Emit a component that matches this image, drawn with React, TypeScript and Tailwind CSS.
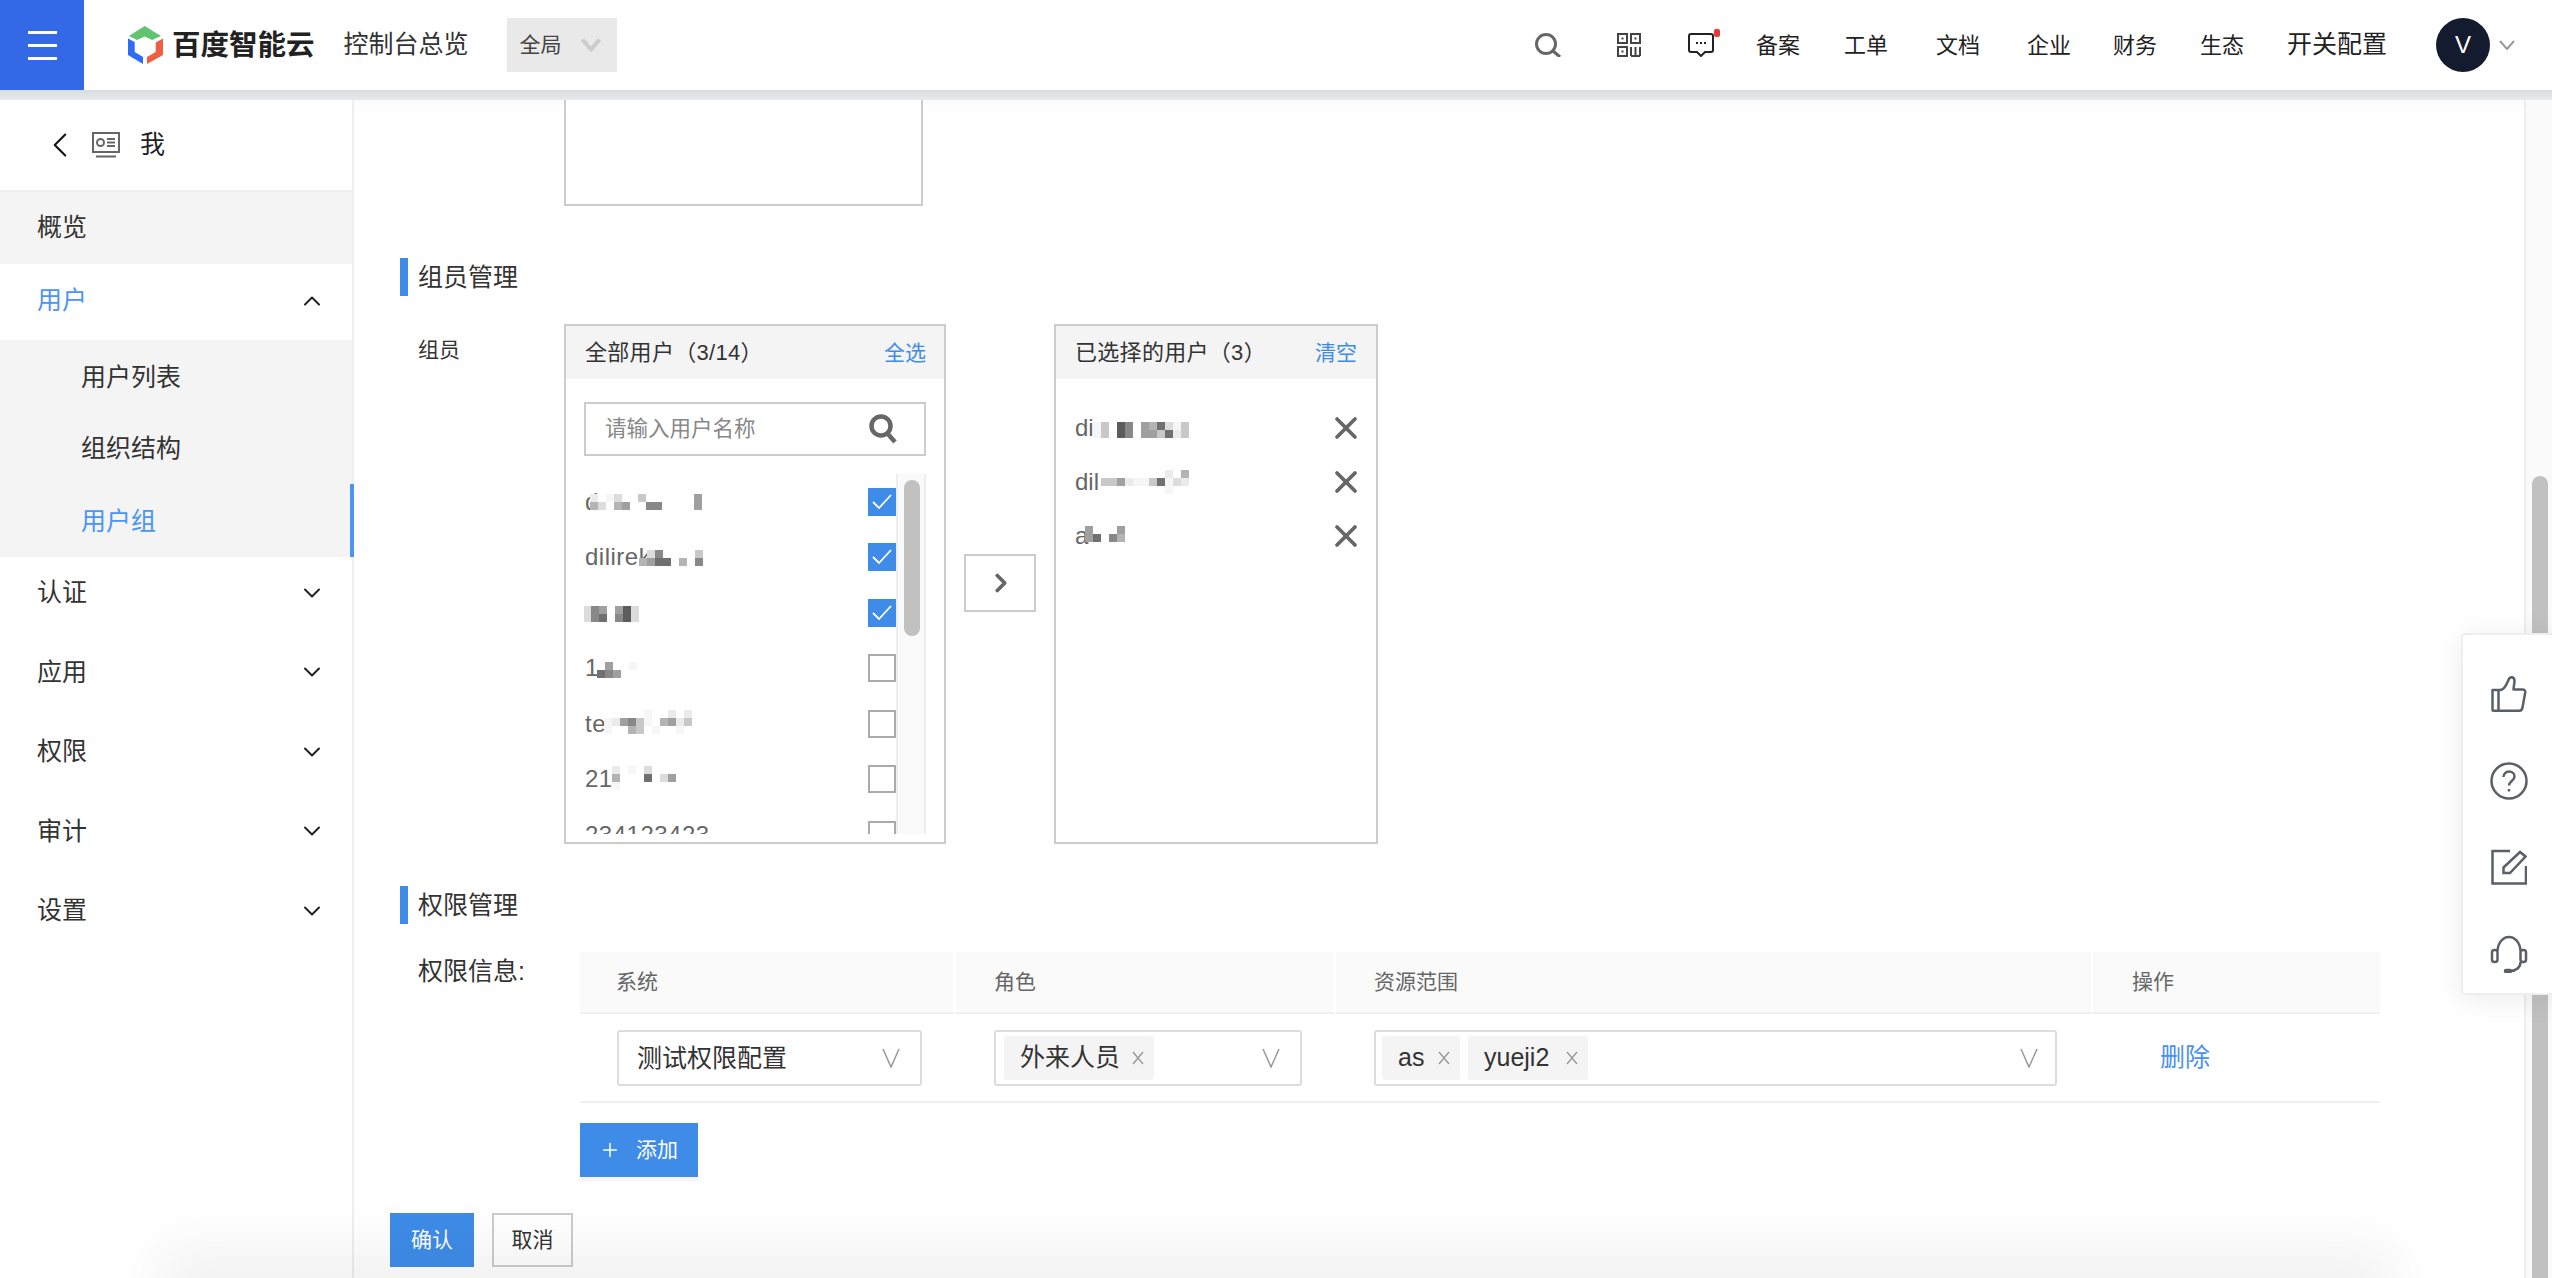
import { ChevronDown, ChevronUp, ChevronLeft, ChevronRight, Plus, X } from 'lucide-react'

const SHADES: Record<string, string> = {
  a: '#f6f6f6',
  b: '#ebebeb',
  c: '#dcdcdc',
  d: '#c8c8c8',
  e: '#b4b4b4',
  f: '#a0a0a0',
  g: '#888888',
  h: '#707070',
  i: '#5c5c5c',
}

// pixelated names from the screenshot, one letter per 8px cell
function Mosaic({ rows, className }: { rows: string[]; className: string }) {
  const cols = Math.max(...rows.map((r) => r.length))
  return (
    <svg className={className} width={cols * 8} height={rows.length * 8} viewBox={`0 0 ${cols * 8} ${rows.length * 8}`}>
      {rows.map((row, y) =>
        row.split('').map((c, x) =>
          SHADES[c] ? <rect key={`${x}-${y}`} x={x * 8} y={y * 8} width="8" height="8" fill={SHADES[c]} /> : null,
        ),
      )}
    </svg>
  )
}

function ThinChevron({ className }: { className: string }) {
  return (
    <svg className={className} width="18" height="20" viewBox="0 0 18 20" fill="none" stroke="#999" strokeWidth="1.5">
      <path d="M1 1l8 18 8-18" />
    </svg>
  )
}

function TagX() {
  return (
    <svg width="12" height="14" viewBox="0 0 12 14" fill="none" stroke="#999" strokeWidth="1.4">
      <path d="M1 1l10 12M11 1L1 13" />
    </svg>
  )
}

function Tag({ label, className }: { label: string; className: string }) {
  return (
    <div className={`flex h-[44px] items-center justify-between rounded-[3px] bg-[#f4f4f4] pl-[16px] pr-[10px] text-[25px] text-[#333] ${className}`}>
      <span>{label}</span>
      <TagX />
    </div>
  )
}

function Logo() {
  return (
    <svg width="36" height="38" viewBox="0 0 36 38">
      <path d="M16.7 0L33 10l-9 4-7.300-3.500L9 14l-8-4z" fill="#5fc36f" />
      <path d="M0 12.500L6.700 16v10L15 31v7L0 29z" fill="#2f6cf6" />
      <path d="M35 12.500V29l-16 9v-7l8.700-5V16.500z" fill="#ee5f42" />
    </svg>
  )
}

function SectionTitle({ title, className }: { title: string; className: string }) {
  return (
    <div className={`flex h-[38px] items-center ${className}`}>
      <div className="h-full w-[8px] bg-[#3e8ce8]" />
      <span className="ml-[10px] pt-[2px] text-[25px] text-[#333]">{title}</span>
    </div>
  )
}

function Checkbox({ checked }: { checked: boolean }) {
  if (checked) {
    return (
      <div className="flex h-[28px] w-[28px] shrink-0 items-center justify-center bg-[#3e8ce8]">
        <svg width="20" height="16" viewBox="0 0 20 16" fill="none" stroke="#fff" strokeWidth="1.8">
          <path d="M1 8l6 6L19 1" />
        </svg>
      </div>
    )
  }
  return <div className="h-[28px] w-[28px] shrink-0 border-2 border-[#aaa] bg-white" />
}

const allUsers = [
  { text: 'd', checked: true, rows: ['b.ac..d......f', 'ec.ef..gg....f'], mosaic: 'absolute left-[6px] top-[20px]' },
  { text: 'dilirek', checked: true, rows: ['.cg....d', 'efhh.e.g'], mosaic: 'absolute left-[55px] top-[20px]' },
  { text: '', checked: true, rows: ['cgf.fic', 'cgh.gic'], mosaic: 'absolute -left-[1px] top-[21px]' },
  { text: '1', checked: false, rows: ['.f..a', 'hgf'], mosaic: 'absolute left-[13px] top-[21px]' },
  { text: 'te', checked: false, rows: ['.....a..b.b', 'abfgda.efbd', 'a..ed.a..a'], mosaic: 'absolute left-[20px] top-[14px]' },
  { text: '21', checked: false, rows: ['b.a.c', 'e...h.cf', 'a'], mosaic: 'absolute left-[28px] top-[14px]' },
  { text: '234123423', checked: false, rows: [], mosaic: '' },
]

const selectedUsers = [
  { text: 'di', rows: ['ad.ig.fehcad', 'ad.ig.ffdhbd'], mosaic: 'absolute left-[18px] top-[21px]' },
  { text: 'dil', rows: ['........b.e', 'ddfbaadhacb', '........a'], mosaic: 'absolute left-[26px] top-[15px]' },
  { text: 'a', rows: ['f...f', 'fh.ge'], mosaic: 'absolute left-[10px] top-[17px]' },
]

const navItems = [
  { label: '备案', className: 'ml-[42px]' },
  { label: '工单', className: 'ml-[44px]' },
  { label: '文档', className: 'ml-[48px]' },
  { label: '企业', className: 'ml-[47px]' },
  { label: '财务', className: 'ml-[42px]' },
  { label: '生态', className: 'ml-[43px]' },
]

const collapsedMenus = ['认证', '应用', '权限', '审计', '设置']

export default function App() {
  return (
    <div className="relative flex h-[1278px] w-[2552px] flex-col overflow-hidden bg-white font-['Liberation_Sans','Noto_Sans_CJK_SC',sans-serif] text-[21px] text-[#333]">
      {/* Top bar */}
      <header className="flex h-[90px] shrink-0 items-center bg-white">
        <div className="flex h-full w-[84px] flex-col items-center justify-center gap-[10px] bg-[#3369e7]">
          <div className="h-[3px] w-[29px] bg-white" />
          <div className="h-[3px] w-[29px] bg-white" />
          <div className="h-[3px] w-[29px] bg-white" />
        </div>
        <div className="ml-[44px]">
          <Logo />
        </div>
        <span className="ml-[8px] text-[28.5px] font-bold text-[#222]">百度智能云</span>
        <span className="ml-[29px] text-[25px] text-[#333]">控制台总览</span>
        <div className="ml-[38px] flex h-[54px] w-[110px] items-center bg-[#e9e9e9] pl-[13px] text-[#444]">
          <span>全局</span>
          <svg className="ml-[19px]" width="20" height="14" viewBox="0 0 20 14" fill="none" stroke="#ccc" strokeWidth="4">
            <path d="M1.500 1.500L10 11.500l8.500-10" />
          </svg>
        </div>

        <div className="ml-auto flex items-center text-[22px] text-[#222]">
          <svg width="26" height="24" viewBox="0 0 26 24" fill="none" stroke="#666" strokeWidth="3">
            <circle cx="11" cy="11" r="9.500" />
            <path d="M18 18l7 6" />
          </svg>
          <svg className="ml-[56px]" width="24" height="24" viewBox="0 0 24 24" fill="none" stroke="#444" strokeWidth="2">
            <rect x="1" y="1" width="9" height="9" />
            <rect x="14" y="1" width="9" height="9" />
            <rect x="1" y="14" width="9" height="9" />
            <path d="M14 14v9M18.500 14v9M23 14v9M14 23h9" />
            <path d="M4.500 5.500h2M17.500 5.500h2M4.500 18.500h2" />
          </svg>
          <div className="relative ml-[47px] h-[24px] w-[26px]">
            <svg width="26" height="24" viewBox="0 0 26 24" fill="none" stroke="#222" strokeWidth="2">
              <path d="M3 1h20a2 2 0 012 2v14a2 2 0 01-2 2h-6l-4 4-4-4H3a2 2 0 01-2-2V3a2 2 0 012-2z" />
              <path d="M8 10h2M12 10h2M16 10h2" />
            </svg>
            <div className="absolute -right-[6px] -top-[4px] h-[8px] w-[6px] rounded-[2px] bg-[#e53935]" />
          </div>
          {navItems.map((item) => (
            <span key={item.label} className={item.className}>
              {item.label}
            </span>
          ))}
          <span className="ml-[43px] text-[25px]">开关配置</span>
          <div className="ml-[49px] flex h-[54px] w-[54px] items-center justify-center rounded-full bg-[#141b2f] text-[24px] text-white">
            V
          </div>
          <svg className="ml-[9px] mr-[37px]" width="16" height="10" viewBox="0 0 16 10" fill="none" stroke="#999" strokeWidth="2">
            <path d="M1 1l7 8 7-8" />
          </svg>
        </div>
      </header>
      <div className="h-[10px] shrink-0 bg-gradient-to-b from-[#d9dde1] to-[#e8eaec]" />

      <div className="flex min-h-0 flex-1">
        {/* Side menu */}
        <aside className="w-[354px] shrink-0 border-r-2 border-[#eee] text-[25px] text-[#333]">
          <div className="flex h-[90px] items-center pl-[39px]">
            <ChevronLeft className="h-[42px] w-[42px] text-[#111]" strokeWidth={1.2} />
            <svg className="ml-[11px]" width="28" height="26" viewBox="0 0 28 26" fill="none" stroke="#666" strokeWidth="2">
              <rect x="1" y="1" width="26" height="19" />
              <circle cx="8.500" cy="10.500" r="3.500" />
              <path d="M15 7h8M15 10.500h8M15 14h8M4 24.500h20" />
            </svg>
            <span className="ml-[20px] text-[#222]">我</span>
          </div>
          <div className="h-[2px] bg-[#eee]" />
          <div className="flex h-[72px] items-center bg-[#f4f4f4] pl-[37px]">概览</div>
          <div className="flex h-[76px] items-center justify-between pb-[3px] pl-[37px] pr-[26px] text-[#4a95f5]">
            <span>用户</span>
            <ChevronUp className="h-[28px] w-[28px] text-[#222]" strokeWidth={1.7} />
          </div>
          <div className="bg-[#f4f4f4] pl-[81px]">
            <div className="flex h-[72px] items-center pt-[3px]">用户列表</div>
            <div className="flex h-[72px] items-center pt-[2px]">组织结构</div>
            <div className="-mr-[2px] -ml-[81px] flex h-[73px] items-center border-r-4 border-[#4a95f5] pl-[81px] pt-[2px] text-[#4a95f5]">
              用户组
            </div>
          </div>
          <div className="-mt-[4px]">
            {collapsedMenus.map((menu) => (
              <div key={menu} className="flex h-[79.5px] items-center justify-between pl-[37px] pr-[26px]">
                <span>{menu}</span>
                <ChevronDown className="h-[28px] w-[28px] text-[#222]" strokeWidth={1.7} />
              </div>
            ))}
          </div>
        </aside>

        {/* Page content */}
        <main className="min-w-0 flex-1 bg-gradient-to-b from-[#fbfbfb] to-white to-[12px] pl-[46px]">
          <div className="ml-[164px] h-[106px] w-[359px] border-2 border-t-0 border-[#ccc] bg-white" />

          <SectionTitle title="组员管理" className="mt-[52px]" />

          <div className="mt-[28px] flex items-start">
            <div className="w-[164px] pl-[18px] pt-[12px] leading-[28px]">组员</div>

            <div className="h-[520px] w-[382px] border-2 border-[#ccc]">
              <div className="flex h-[53px] items-center justify-between bg-[#f4f4f4] pl-[19px] pr-[18px]">
                <span className="text-[22px] tracking-[0.3px]">全部用户（3/14）</span>
                <span className="text-[#3e8ce8]">全选</span>
              </div>
              <div className="mx-[18px] mt-[23px] flex h-[54px] items-center justify-between border-2 border-[#ccc] pl-[19px] pr-[27px]">
                <span className="text-[21.5px] text-[#888]">请输入用户名称</span>
                <svg width="28" height="30" viewBox="0 0 28 30" fill="none" stroke="#666" strokeWidth="4.500">
                  <circle cx="12" cy="12" r="9.500" />
                  <path d="M18 19l8 9" />
                </svg>
              </div>
              <div className="ml-[18px] mr-[18px] mt-[18px] flex h-[360px] overflow-hidden">
                <div className="min-w-0 flex-1">
                  {allUsers.map((user, i) => (
                    <div key={i} className="flex h-[55.5px] items-center justify-between text-[24px] tracking-[0.5px] text-[#666]">
                      <div className="relative flex h-full flex-1 items-center pl-[1px]">
                        <span>{user.text}</span>
                        {user.rows.length > 0 && <Mosaic rows={user.rows} className={user.mosaic} />}
                      </div>
                      <Checkbox checked={user.checked} />
                    </div>
                  ))}
                </div>
                <div className="h-full w-[30px] shrink-0 border-x-2 border-[#eee] bg-[#fafafa] pl-[6px] pt-[6px]">
                  <div className="h-[156px] w-[16px] rounded-full bg-[#c1c1c1]" />
                </div>
              </div>
            </div>

            <div className="ml-[18px] mt-[230px] flex h-[58px] w-[72px] items-center justify-center border-2 border-[#ccc]">
              <ChevronRight className="ml-[2px] h-[30px] w-[30px] text-[#666]" strokeWidth={3} />
            </div>

            <div className="ml-[18px] h-[520px] w-[324px] border-2 border-[#ccc]">
              <div className="flex h-[53px] items-center justify-between bg-[#f4f4f4] pl-[19px] pr-[19px]">
                <span className="text-[22px] tracking-[0.3px]">已选择的用户（3）</span>
                <span className="text-[#3e8ce8]">清空</span>
              </div>
              <div className="pl-[19px] pr-[12px] pt-[22px]">
                {selectedUsers.map((user) => (
                  <div key={user.text} className="flex h-[54px] items-center justify-between text-[24px] text-[#666]">
                    <div className="relative flex h-full flex-1 items-center">
                      <span>{user.text}</span>
                      <Mosaic rows={user.rows} className={user.mosaic} />
                    </div>
                    <X className="h-[36px] w-[36px] text-[#666]" strokeWidth={2.5} />
                  </div>
                ))}
              </div>
            </div>
          </div>

          <SectionTitle title="权限管理" className="mt-[42px]" />

          <div className="mt-[28px] flex items-start">
            <div className="w-[180px] pl-[18px] pt-[5px] text-[25px] leading-[28px]">权限信息:</div>

            <div className="w-[1800px]">
              <div className="grid grid-cols-[376px_380px_757px_287px] text-[#666]">
                <div className="flex h-[62px] items-center border-b-2 border-r-[3px] border-b-[#f0f0f0] border-r-white bg-[#fafafa] pl-[36px]">系统</div>
                <div className="flex h-[62px] items-center border-b-2 border-r-[3px] border-b-[#f0f0f0] border-r-white bg-[#fafafa] pl-[38px]">角色</div>
                <div className="flex h-[62px] items-center border-b-2 border-r-2 border-b-[#f0f0f0] border-r-white bg-[#fafafa] pl-[38px]">资源范围</div>
                <div className="flex h-[62px] items-center border-b-2 border-b-[#f0f0f0] bg-[#fafafa] pl-[39px]">操作</div>
              </div>
              <div className="grid h-[89px] grid-cols-[376px_380px_757px_287px] items-center border-b-2 border-[#f0f0f0] pt-[1px] text-[25px]">
                <div className="pl-[37px]">
                  <div className="flex h-[56px] w-[305px] items-center justify-between rounded-[3px] border-2 border-[#ddd] pl-[18px] pr-[20px]">
                    <span className="pt-[2px]">测试权限配置</span>
                    <ThinChevron className="shrink-0" />
                  </div>
                </div>
                <div className="pl-[38px]">
                  <div className="flex h-[56px] w-[308px] items-center justify-between rounded-[3px] border-2 border-[#ddd] pl-[8px] pr-[20px]">
                    <Tag label="外来人员" className="w-[150px]" />
                    <ThinChevron className="shrink-0" />
                  </div>
                </div>
                <div className="pl-[38px]">
                  <div className="flex h-[56px] w-[683px] items-center rounded-[3px] border-2 border-[#ddd] pl-[6px] pr-[17px]">
                    <Tag label="as" className="w-[78px]" />
                    <Tag label="yueji2" className="ml-[8px] w-[120px]" />
                    <ThinChevron className="ml-auto shrink-0" />
                  </div>
                </div>
                <div className="pl-[67px] text-[#4a90f0]">删除</div>
              </div>
              <div className="mt-[20px] flex h-[54px] w-[118px] items-center bg-[#3e8ce8] pl-[19px] text-white shadow-[0_4px_0_#f5f5f5]">
                <Plus className="h-[22px] w-[22px]" strokeWidth={1.6} />
                <span className="ml-[15px]">添加</span>
              </div>
            </div>
          </div>

          <div className="-ml-[10px] mt-[36px] flex gap-[18px]">
            <div className="flex h-[54px] w-[84px] items-center justify-center bg-[#3e8ce8] text-white">确认</div>
            <div className="flex h-[54px] w-[81px] items-center justify-center border-2 border-[#ccc] bg-white text-[#333]">取消</div>
          </div>
        </main>

        {/* Page scrollbar */}
        <div className="flex w-[28px] shrink-0 flex-col border-l-2 border-[#eee] bg-[#fafafa] pl-[6px] pr-[4px] pt-[376px]">
          <div className="flex-1 rounded-t-full bg-[#c1c1c1]" />
        </div>
      </div>

      {/* Floating help panel */}
      <div className="absolute left-[2461px] top-[633px] flex h-[362px] w-[100px] flex-col gap-[49.5px] rounded-l-[4px] border-2 border-[#eee] bg-white pl-[28px] pt-[41px] shadow-[0_4px_30px_rgba(0,0,0,0.08)]">
        <svg width="36" height="36" viewBox="0 0 36 36" fill="none" stroke="#5b6068" strokeWidth="2.500" strokeLinejoin="round">
          <path d="M1.500 14H9c3 0 6-4 8-9 1-2.800 2-3.800 3.500-3.800 2 0 3 1.800 3 3.800 0 3-1 6-1 8.500h9c2 0 3 1 2.700 3l-2.700 15c-.3 2-1.500 3.300-3.500 3.300H2.500c-.6 0-1-.4-1-1V14z" />
          <path d="M7.500 14v20.500" />
        </svg>
        <svg className="-ml-[1px]" width="38" height="38" viewBox="0 0 38 38" fill="none" stroke="#5b6068" strokeWidth="2.500">
          <circle cx="19" cy="19" r="17.500" />
          <path d="M13.500 15c0-3.200 2.400-5.500 5.500-5.500s5.500 2.200 5.500 5c0 4.500-5.500 4.500-5.500 9" />
          <path d="M19 27v2.500" />
        </svg>
        <svg width="36" height="36" viewBox="0 0 36 36" fill="none" stroke="#5b6068" strokeWidth="2.500">
          <path d="M19 2H1.500v32.500H35V17" />
          <path d="M12.500 18.500L29 3l5.500 4.500L19 24h-6.500z" />
        </svg>
        <svg className="-ml-[1px]" width="38" height="38" viewBox="0 0 38 38" fill="none" stroke="#5b6068" strokeWidth="2.500">
          <path d="M7.500 16C8 7.500 13 2 19 2s11 5.500 11.500 14" />
          <rect x="2" y="15" width="5.500" height="12" rx="2.500" />
          <rect x="30.500" y="15" width="5.500" height="12" rx="2.500" />
          <path d="M30.500 27c0 5.500-4.500 9-10 9" />
          <path d="M16 36h4" strokeWidth="4.500" strokeLinecap="round" />
        </svg>
      </div>

      {/* Shadow of the bar that sits just below the fold */}
      <div className="pointer-events-none absolute -bottom-[20px] left-[190px] right-[190px] h-[20px] shadow-[0_0_60px_30px_rgba(0,0,0,0.06)]" />
    </div>
  )
}
